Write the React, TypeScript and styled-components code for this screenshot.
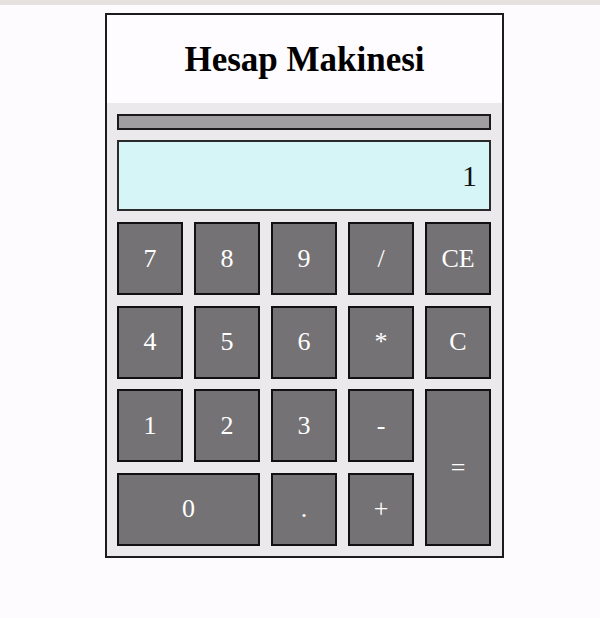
import React from "react";
import styled, { createGlobalStyle } from "styled-components";

const Global = createGlobalStyle`
  html, body { margin: 0; padding: 0; background: #fdfbfd; }
  body { font-family: "Liberation Serif", "Times New Roman", serif; }
`;

const TopStrip = styled.div`
  height: 5px;
  background: #e6e1df;
`;

const Page = styled.div`
  padding: 8px 0 0 105px;
`;

const Calculator = styled.div`
  width: 395px;
  border: 2px solid #1c1c1c;
  background: #ebe9eb;
`;

const Header = styled.div`
  height: 86px;
  padding-top: 2px;
  background: #fefcfe;
  display: flex;
  align-items: center;
  justify-content: center;
`;

const Title = styled.h1`
  margin: 0;
  font-size: 35px;
  font-weight: bold;
  color: #000;
`;

const Body = styled.div`
  padding: 11px 11px 10px 10px;
  display: flex;
  flex-direction: column;
`;

const Bar = styled.div`
  height: 12px;
  border: 2px solid #1a1a1a;
  background: #a09ea0;
`;

const Display = styled.div`
  margin-top: 10px;
  height: 67px;
  border: 2px solid #2a2a2a;
  background: #d6f5f7;
  display: flex;
  align-items: center;
  justify-content: flex-end;
  padding-right: 12px;
  font-size: 30px;
  color: #111;
`;

const Keys = styled.div`
  margin-top: 11px;
  display: grid;
  grid-template-columns: repeat(5, 1fr);
  grid-auto-rows: 73px;
  column-gap: 11px;
  row-gap: 10.67px;
`;

const Key = styled.button<{ $col?: string; $row?: string }>`
  grid-column: ${(p) => p.$col ?? "auto"};
  grid-row: ${(p) => p.$row ?? "auto"};
  margin: 0;
  padding: 0;
  border: 2px solid #111;
  background: #747274;
  color: #fff;
  font-family: "Liberation Serif", "Times New Roman", serif;
  font-size: 26px;
  display: flex;
  align-items: center;
  justify-content: center;
`;

const keys: { label: string; col?: string; row?: string }[] = [
  { label: "7" },
  { label: "8" },
  { label: "9" },
  { label: "/" },
  { label: "CE" },
  { label: "4" },
  { label: "5" },
  { label: "6" },
  { label: "*" },
  { label: "C" },
  { label: "1" },
  { label: "2" },
  { label: "3" },
  { label: "-" },
  { label: "=", col: "5", row: "3 / span 2" },
  { label: "0", col: "1 / span 2" },
  { label: "." },
  { label: "+" },
];

export default function App() {
  return (
    <>
      <Global />
      <TopStrip />
      <Page>
        <Calculator>
          <Header>
            <Title>Hesap Makinesi</Title>
          </Header>
          <Body>
            <Bar />
            <Display>1</Display>
            <Keys>
              {keys.map((k) => (
                <Key key={k.label} $col={k.col} $row={k.row}>
                  {k.label}
                </Key>
              ))}
            </Keys>
          </Body>
        </Calculator>
      </Page>
    </>
  );
}
